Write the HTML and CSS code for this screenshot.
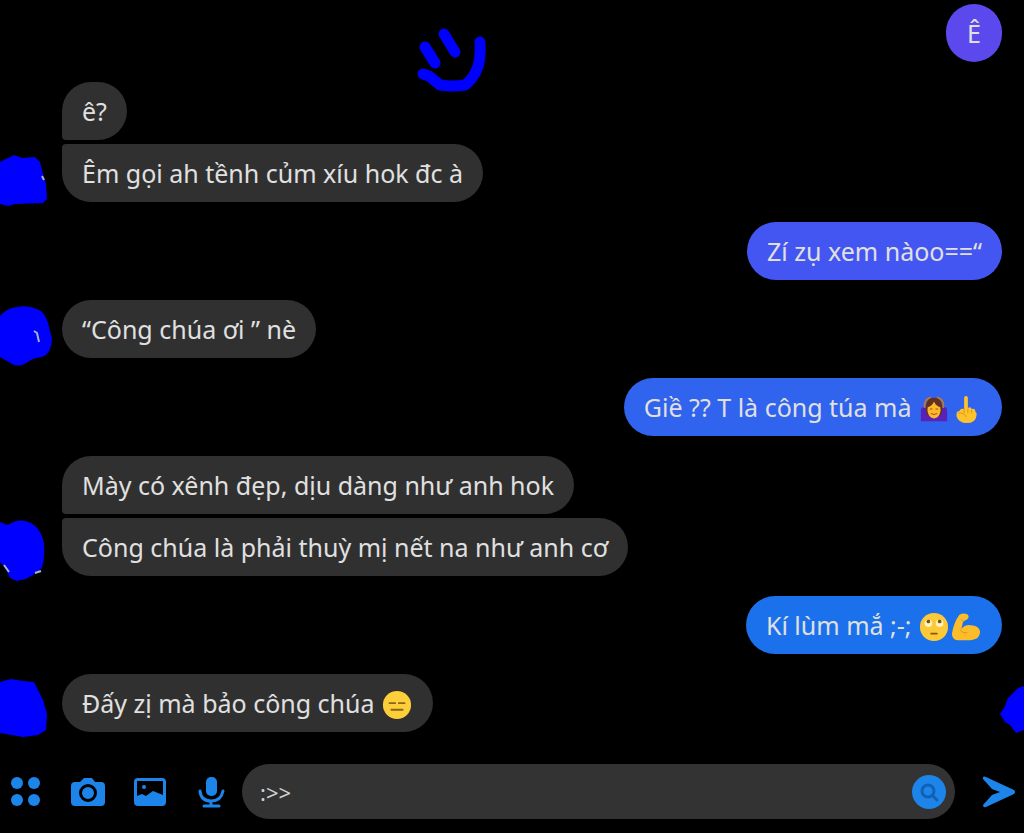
FILE: index.html
```html
<!DOCTYPE html>
<html lang="vi">
<head>
  <meta charset="UTF-8">
  <meta name="viewport" content="width=device-width, initial-scale=1.0">
  <title>Chat</title>
  <link rel="stylesheet" href="styles.css">
</head>
<body>
  <svg class="doodle" viewBox="0 0 110 100" aria-hidden="true">
    <path d="M25 37l10 16M44 24l11 18M80 32q1 18-3 27-4 10-12 16-12 2-25 0l-11-9-6-2"/>
  </svg>

  <main class="chat">
    <div class="row sent">
      <p class="bubble violet">Ê</p>
    </div>

    <div class="row">
      <svg class="avatar" viewBox="0 0 62 58" aria-hidden="true">
        <path d="M0 18l8-4 6-3 8 3 13-1 5 5 3 12 3 10 1 15-4 4-28 1-7 2-8-2z"/>
        <path class="peek" d="M42 32l2 4"/>
      </svg>
      <div class="messages">
        <p class="bubble first">ê?</p>
        <p class="bubble last">Êm gọi ah tềnh củm xíu hok đc à</p>
      </div>
    </div>

    <div class="row sent">
      <p class="bubble indigo">Zí zụ xem nàoo==“</p>
    </div>

    <div class="row">
      <svg class="avatar" viewBox="0 0 62 58" aria-hidden="true">
        <path d="M0 16q5-6 12-8 14-4 25 1 8 3 11 14l4 16q-1 15-10 18-10 1-14 5-7 5-14 3l-14-8z"/>
        <path class="peek" d="M34 31l3 2 2 9"/>
      </svg>
      <div class="messages">
        <p class="bubble">“Công chúa ơi ” nè</p>
      </div>
    </div>

    <div class="row sent">
      <p class="bubble royal">Giề ?? T là công túa mà
        <svg class="emoji" viewBox="0 0 32 32" role="img" aria-label="🙆‍♀️">
          <path fill="#5b20b5" d="M2 29V18q0-5 5-4l3 6h12l3-6q5-1 5 4v11z"/>
          <path fill="none" stroke="#b9783a" stroke-width="2" stroke-linecap="round" d="M6 14Q5 6 12 4M26 14Q27 6 20 4"/>
          <path fill="#63301f" d="M8 22Q5 4 16 4t8 18z"/>
          <ellipse cx="16" cy="17" rx="7" ry="9" fill="#fdb82c"/>
          <path fill="#63301f" d="M9 14q5-1 7-6 2 5 7 6-1-9-7-9t-7 9z"/>
          <path fill="none" stroke="#9a4b19" stroke-linecap="round" d="M13 21q3 2 6 0M12 16h2M18 16h2"/>
        </svg><svg class="emoji" viewBox="0 0 32 32" role="img" aria-label="🖕">
          <path fill="#fdc32c" d="M14 16V4q0-2 2-2t2 2v11q3-2 4 1 4-1 4 3 2 1 1 5-1 7-10 7T6 24q-1-6 3-6 1-3 5-2z"/>
          <path fill="none" stroke="#dc911b" stroke-linecap="round" d="M14 16v4M18 16v4M22 17v3M8 20q6 0 8 4"/>
        </svg>
      </p>
    </div>

    <div class="row">
      <svg class="avatar" viewBox="0 0 62 58" aria-hidden="true">
        <path d="M0 4l7 3 9-4q10-2 18 4 8 6 10 19 1 12-2 24l-9 7-7 4-9 2-7-3-5-10-5-6z"/>
        <path class="peek" d="M4 47l5 7M35 55l6-2"/>
      </svg>
      <div class="messages">
        <p class="bubble first">Mày có xênh đẹp, dịu dàng như anh hok</p>
        <p class="bubble last">Công chúa là phải thuỳ mị nết na như anh cơ</p>
      </div>
    </div>

    <div class="row sent">
      <p class="bubble blue">Kí lùm mắ ;-;
        <svg class="emoji" viewBox="0 0 32 32" role="img" aria-label="🙄">
          <circle cx="16" cy="16" r="15" fill="#fdc936"/>
          <circle cx="10" cy="12" r="4" fill="#fff3c4"/>
          <circle cx="22" cy="12" r="4" fill="#fff3c4"/>
          <circle cx="10" cy="10" r="2" fill="#7d5712"/>
          <circle cx="22" cy="10" r="2" fill="#7d5712"/>
          <path fill="none" stroke="#8b5312" stroke-width="2" stroke-linecap="round" d="M13 23h6"/>
        </svg><svg class="emoji" viewBox="0 0 32 32" role="img" aria-label="💪">
          <path fill="#fdbd2b" d="M9 3q5-3 9 0 2 3-1 5l-4 2-2 8q4-5 10-4 9 0 10 7 0 8-10 9H7q-6 0-6-7Q3 11 9 3z"/>
          <path fill="none" stroke="#dc911b" stroke-linecap="round" d="M10 19q2 4 7 3M13 10l-2-2"/>
        </svg>
      </p>
    </div>

    <div class="row">
      <svg class="avatar" viewBox="0 0 62 58" aria-hidden="true">
        <path d="M0 8l11-3 12 2 11 1 4 8 5 10 4 14-1 16-8 5-15 2-23-4z"/>
      </svg>
      <div class="messages">
        <p class="bubble">Đấy zị mà bảo công chúa
          <svg class="emoji" viewBox="0 0 32 32" role="img" aria-label="😑">
            <circle cx="16" cy="16" r="15" fill="#fdcf3a"/>
            <path fill="none" stroke="#8b6414" stroke-width="2" stroke-linecap="round" d="M8 14h6M18 14h6M10 21h12"/>
          </svg>
        </p>
      </div>
      <svg class="seen" viewBox="0 0 24 58" aria-hidden="true">
        <path d="M24 12l-6 2-10 10-4 10-4 6 5 8 5 3 6 8 8-3z"/>
      </svg>
    </div>
  </main>

  <form class="composer">
    <button type="button" aria-label="Thêm">
      <svg viewBox="0 0 36 36">
        <circle cx="9" cy="9" r="6"/><circle cx="26" cy="9" r="6"/>
        <circle cx="9" cy="26" r="6"/><circle cx="26" cy="26" r="6"/>
      </svg>
    </button>
    <button type="button" aria-label="Máy ảnh">
      <svg viewBox="0 0 36 36">
        <path fill-rule="evenodd" d="M12 6l2-2h8l3 4h6q4 0 4 4v16q0 4-4 4H5q-4 0-4-4V12q0-4 4-4h5zM18 10a9 9 0 1 0 0 18 9 9 0 0 0 0-18zM18 13a6 6 0 1 1 0 12 6 6 0 0 1 0-12z"/>
      </svg>
    </button>
    <button type="button" aria-label="Thư viện ảnh">
      <svg viewBox="0 0 36 36">
        <path fill-rule="evenodd" d="M6 4h24q4 0 4 4v20q0 4-4 4H6q-4 0-4-4V8q0-4 4-4zM5 7v15l5-2 4 2 7-5 10 4V7z"/>
        <circle cx="12" cy="13" r="2"/>
      </svg>
    </button>
    <button type="button" aria-label="Ghi âm">
      <svg viewBox="0 0 36 36">
        <rect x="12" y="3" width="11" height="19" rx="5"/>
        <path class="line" d="M6 17q1 10 11 10t12-10M17 27v5M10 32h15"/>
      </svg>
    </button>
    <div class="field">
      <input type="text" value=":&gt;&gt;" aria-label="Tin nhắn">
      <button type="button" aria-label="Tìm kiếm">
        <svg viewBox="0 0 36 36">
          <circle cx="18" cy="18" r="17"/>
          <path class="glass" d="M22 22l4 4M17 11a6 6 0 1 0 0 12 6 6 0 0 0 0-12z"/>
        </svg>
      </button>
    </div>
    <button class="send" type="submit" aria-label="Gửi">
      <svg viewBox="0 0 36 36">
        <path d="M2 3q1-1 3 0l28 13q2 2 0 4L5 33q-3 1-3-2l9-10 8-3-8-3L2 5z"/>
      </svg>
    </button>
  </form>
</body>
</html>
```
FILE: styles.css
```css
* {
  box-sizing: border-box;
}

body {
  margin: 0;
  min-height: 100vh;
  display: flex;
  flex-direction: column;
  background-color: #000;
  color: #e0e0e0;
  font-family: "Noto Sans", "Open Sans", sans-serif;
  font-size: 25px;
  line-height: 26px;
}

/* Hand-drawn marks */
.doodle {
  position: absolute;
  top: 10px;
  left: 400px;
  width: 110px;
  height: 100px;
  fill: none;
  stroke: #0000ff;
  stroke-width: 11;
  stroke-linecap: round;
  stroke-linejoin: round;
}

.avatar,
.seen {
  flex: none;
  height: 58px;
  fill: #0000ff;
  overflow: visible;
}

.avatar {
  width: 62px;
}

.seen {
  width: 24px;
  margin-left: auto;
}

.peek {
  fill: none;
  stroke: #a9b4c4;
  stroke-width: 2;
}

/* Conversation */
.chat {
  flex: 1;
  display: flex;
  flex-direction: column;
  gap: 20px;
  padding-top: 4px;
}

.row {
  display: flex;
  align-items: flex-end;
}

.sent {
  justify-content: flex-end;
  padding-right: 22px;
}

.messages {
  display: flex;
  flex-direction: column;
  align-items: flex-start;
  gap: 4px;
}

.bubble {
  min-width: 56px;
  margin: 0;
  padding: 16px 20px;
  border-radius: 29px;
  background-color: #303030;
  text-align: center;
}

.first {
  border-bottom-left-radius: 4px;
}

.last {
  border-top-left-radius: 4px;
}

.violet {
  background-color: #5b49ee;
}

.indigo {
  background-color: #4456f2;
}

.royal {
  background-color: #3063ee;
}

.blue {
  background-color: #1b70ec;
}

.emoji {
  width: 32px;
  height: 30px;
  margin: -8px 0 -5px;
  vertical-align: -2px;
}

/* Message box and its buttons */
.composer {
  display: flex;
  align-items: center;
  gap: 26px;
  padding: 0 7px 14px 8px;
}

.composer button {
  flex: none;
  width: 36px;
  height: 36px;
  padding: 0;
  border: none;
  background: none;
  cursor: pointer;
}

.composer svg {
  display: block;
  fill: #1d84ea;
}

.composer .line {
  fill: none;
  stroke: #1d84ea;
  stroke-width: 3;
  stroke-linecap: round;
}

.composer .glass {
  fill: none;
  stroke: #1260b4;
  stroke-width: 3;
  stroke-linecap: round;
}

.field {
  flex: 1;
  display: flex;
  align-items: center;
  height: 55px;
  margin-left: -14px;
  padding: 0 8px 0 18px;
  border-radius: 28px;
  background-color: #333;
}

.field input {
  flex: 1;
  min-width: 0;
  padding: 0;
  border: none;
  outline: none;
  background: none;
  color: #d0d0d0;
  font: inherit;
  font-size: 22px;
}
```
